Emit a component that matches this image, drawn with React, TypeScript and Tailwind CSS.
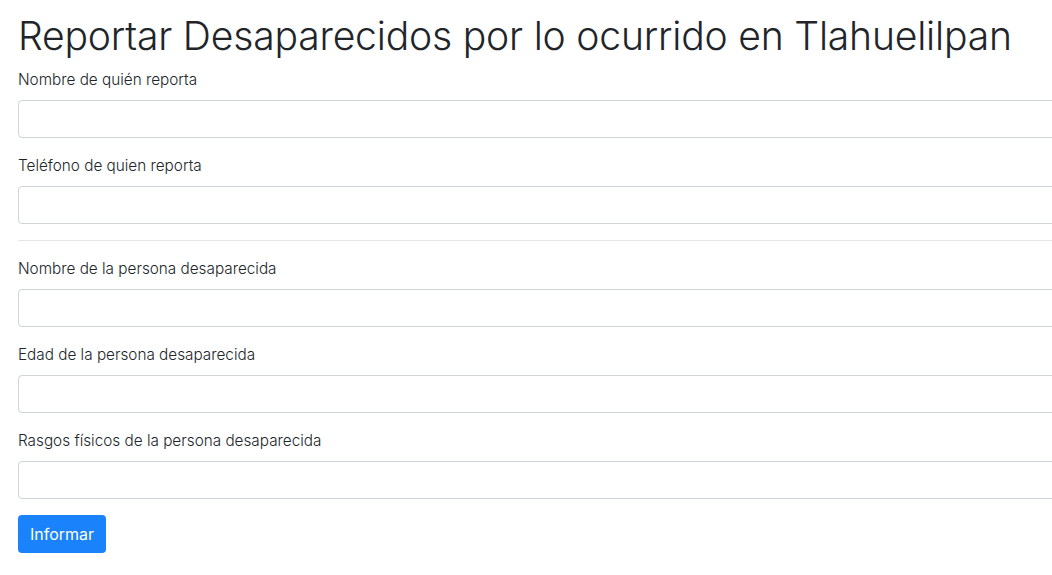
export default function App() {
  const fields1 = ['Nombre de quién reporta', 'Teléfono de quien reporta']
  const fields2 = [
    'Nombre de la persona desaparecida',
    'Edad de la persona desaparecida',
    'Rasgos físicos de la persona desaparecida',
  ]

  const Field = ({ label }: { label: string }) => (
    <div className="mb-4">
      <label className="block mb-2 text-[15.3px] leading-6 font-light text-[#212529]">{label}</label>
      <input
        type="text"
        className="block w-full h-[38px] px-3 rounded border border-[#ced4da] bg-white text-base outline-none"
      />
    </div>
  )

  return (
    <div className="w-screen h-screen overflow-hidden bg-white" style={{ fontFamily: 'Inter, "Noto Sans", sans-serif' }}>
      <div className="w-[1100px] pt-3 pl-[18px]">
        <h1 className="mb-2 text-[39.1px] leading-[48px] font-light text-[#212529] tracking-[-0.2px]">
          Reportar Desaparecidos por lo ocurrido en Tlahuelilpan
        </h1>
        <form>
          {fields1.map((f) => (
            <Field key={f} label={f} />
          ))}
          <hr className="mb-4 border-t border-black/10" />
          {fields2.map((f) => (
            <Field key={f} label={f} />
          ))}
          <button
            type="button"
            className="w-[88px] h-[38px] rounded bg-[#1a82fb] text-white text-base leading-6"
          >
            Informar
          </button>
        </form>
      </div>
    </div>
  )
}
